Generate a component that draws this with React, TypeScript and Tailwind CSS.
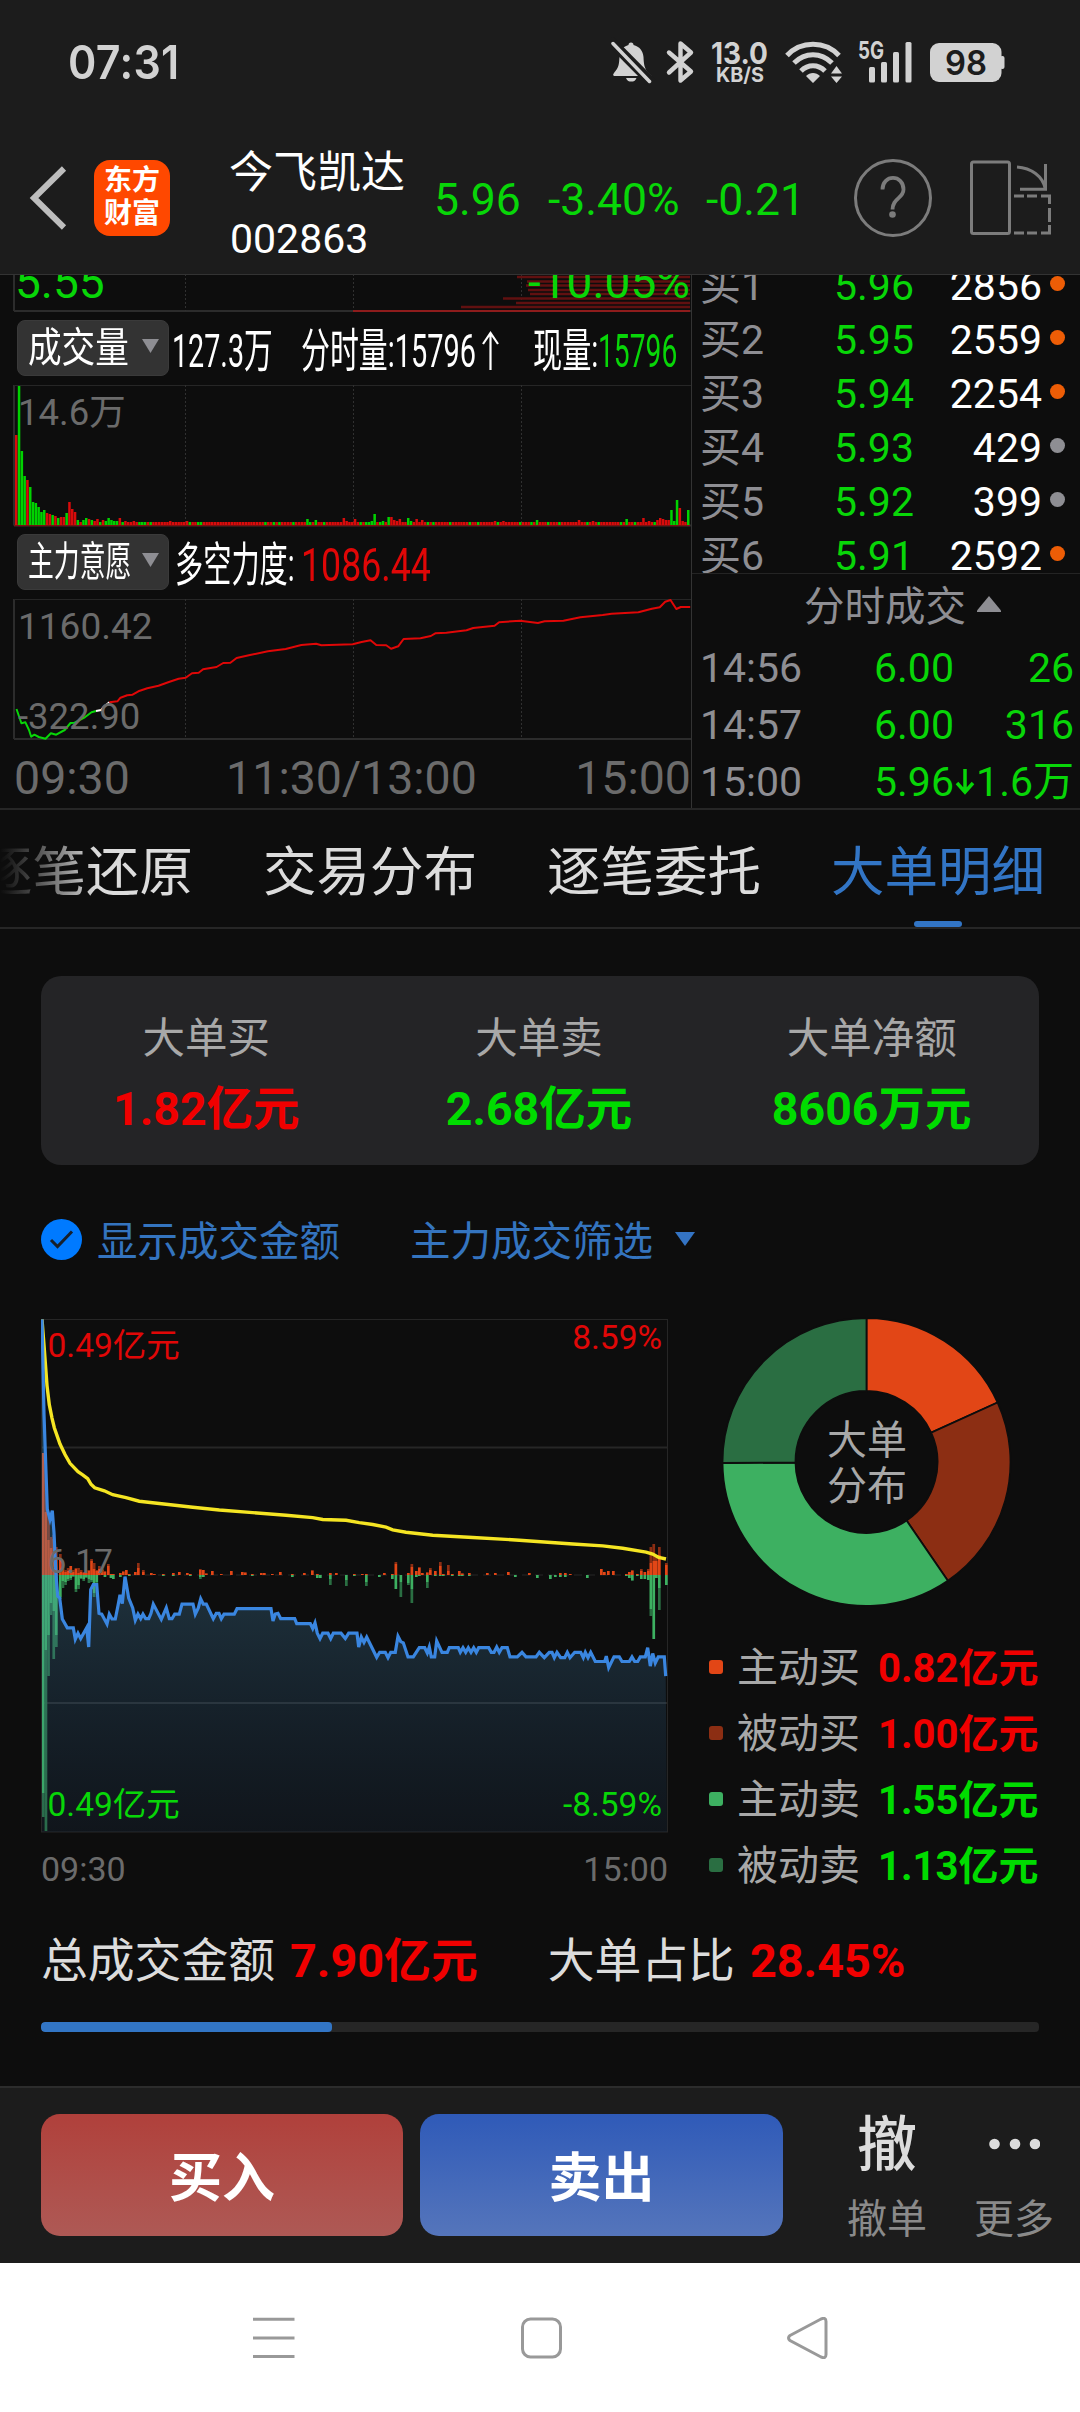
import { clsx } from 'clsx';

const GREEN = '#08d608';
const RED = '#e00707';

const bids = [
  { label: '买1', price: '5.96', qty: '2856', hot: true },
  { label: '买2', price: '5.95', qty: '2559', hot: true },
  { label: '买3', price: '5.94', qty: '2254', hot: true },
  { label: '买4', price: '5.93', qty: '429', hot: false },
  { label: '买5', price: '5.92', qty: '399', hot: false },
  { label: '买6', price: '5.91', qty: '2592', hot: true },
];

const trades = [
  { time: '14:56', price: '6.00', qty: '26', down: false },
  { time: '14:57', price: '6.00', qty: '316', down: false },
  { time: '15:00', price: '5.96', qty: '1.6万', down: true },
];

const summary = [
  { label: '大单买', value: '1.82亿元', up: true },
  { label: '大单卖', value: '2.68亿元', up: false },
  { label: '大单净额', value: '8606万元', up: false },
];

const slices = [
  { label: '主动买', value: 0.82, text: '0.82亿元', color: '#e24616', dot: 'bg-[#e24616]', up: true },
  { label: '被动买', value: 1.0, text: '1.00亿元', color: '#8c2e13', dot: 'bg-[#8c2e13]', up: true },
  { label: '主动卖', value: 1.55, text: '1.55亿元', color: '#3db061', dot: 'bg-[#3db061]', up: false },
  { label: '被动卖', value: 1.13, text: '1.13亿元', color: '#2a6e42', dot: 'bg-[#2a6e42]', up: false },
];

// one entry per traded minute that stands out: [minute, height, colour]
const volumePeaks: [number, number, 'r' | 'g'][] = [
  [0, 90, 'r'], [1, 139, 'g'], [2, 74, 'g'], [3, 49, 'g'], [4, 45, 'r'], [5, 38, 'g'], [6, 23, 'g'], [7, 22, 'g'],
  [8, 18, 'g'], [9, 13, 'g'], [10, 15, 'g'], [11, 12, 'r'], [12, 11, 'r'], [13, 10, 'g'], [14, 9, 'r'], [15, 7, 'g'],
  [16, 8, 'r'], [17, 8, 'r'], [18, 12, 'g'], [19, 23, 'r'], [20, 16, 'r'], [21, 13, 'r'], [22, 5, 'g'], [23, 3, 'r'],
  [24, 5, 'g'], [25, 7, 'g'], [26, 6, 'r'], [27, 5, 'g'], [28, 4, 'r'], [29, 6, 'r'], [30, 3, 'g'], [31, 5, 'r'],
  [32, 4, 'g'], [33, 7, 'g'], [34, 5, 'g'], [35, 4, 'g'], [36, 4, 'g'], [37, 7, 'r'], [38, 3, 'g'], [39, 4, 'r'],
  [42, 4, 'r'], [55, 4, 'r'], [61, 4, 'r'], [104, 6, 'g'], [107, 5, 'g'], [117, 7, 'r'], [118, 4, 'r'], [121, 6, 'r'],
  [125, 3, 'g'], [127, 4, 'g'], [128, 11, 'g'], [131, 4, 'g'], [133, 8, 'g'], [134, 8, 'r'], [135, 5, 'r'], [136, 4, 'r'],
  [137, 6, 'r'], [140, 7, 'g'], [141, 4, 'g'], [143, 6, 'r'], [145, 5, 'r'], [171, 4, 'r'], [174, 4, 'r'], [186, 5, 'g'],
  [201, 5, 'r'], [206, 4, 'r'], [218, 6, 'g'], [224, 7, 'r'], [226, 4, 'r'], [229, 5, 'r'], [230, 7, 'r'], [231, 6, 'r'],
  [232, 5, 'r'], [233, 5, 'r'], [234, 15, 'g'], [235, 4, 'g'], [236, 25, 'g'], [237, 17, 'r'], [238, 4, 'r'], [240, 15, 'g'],
];
const quietGreen = [44, 45, 46, 48, 62, 65, 66, 89, 92, 94, 99, 105, 110, 123, 126, 130, 147, 149, 155, 162, 165, 172, 180, 184, 190, 194, 204, 208, 216, 221, 228];

const volume = Array.from({ length: 241 }, (_, i) => {
  const peak = volumePeaks.find((p) => p[0] === i);
  return {
    x: 15 + i * 2.8,
    h: peak ? peak[1] : 3,
    color: (peak ? peak[2] === 'g' : quietGreen.includes(i)) ? '#00d200' : '#d90b0b',
  };
});

// big order flow: [x, buy active, buy passive, sell active, sell passive], in px from the zero line
const flow = [
  [1, 122, 0, 218, 24], [3.6, 63, 20, 75, 181], [6.2, 35, 27, 60, 41], [8.8, 27, 11, 28, 12], [11.4, 36, 4, 36, 48],
  [14, 16, 12, 60, 12], [18, 15, 6, 22, 2], [20.6, 6, 2, 6, 7], [23.2, 3, 2, 7, 3], [25.8, 4, 3, 4, 2],
  [28.4, 9, 0, 3, 2], [31, 3, 2, 1, 1], [33.6, 6, 1, 14, 3], [36.2, 2, 5, 10, 4], [38.8, 3, 2, 3, 1],
  [41.4, 2, 1, 4, 2], [44, 2, 3, 2, 1], [46.6, 4, 1, 4, 4], [49.2, 14, 2, 5, 2], [51.8, 6, 6, 18, 4], [54.4, 4, 1, 7, 3],
  [57, 6, 3, 0, 0], [60, 5, 1, 0, 0], [62.6, 3, 1, 2, 0], [66, 9, 2, 0, 0], [68.6, 1, 0, 3, 0], [71, 1, 0, 4, 0],
  [78, 2, 0, 2, 0], [81, 3, 1, 0, 0], [84, 5, 0, 0, 0], [87, 1, 0, 1, 0], [93, 3, 0, 0, 0], [96, 7, 5, 0, 0], [101, 3, 2, 0, 0],
  [109, 2, 0, 0, 0], [112, 1, 0, 0, 0], [121, 1, 0, 1, 0], [131, 2, 0, 1, 0], [137, 3, 0, 0, 0], [145, 2, 0, 0, 0],
  [148, 1, 0, 1, 0], [158, 5, 1, 2, 2], [161, 5, 0, 2, 0], [164, 1, 1, 0, 0], [170, 4, 0, 0, 0], [179, 1, 0, 0, 0],
  [189, 4, 0, 0, 0], [200, 3, 0, 0, 0], [203, 2, 1, 0, 0], [210, 1, 0, 1, 0], [219, 2, 0, 0, 0], [222, 2, 0, 0, 0],
  [230, 1, 0, 0, 0], [238, 3, 0, 0, 0], [250, 1, 0, 2, 0], [262, 2, 0, 0, 0], [270, 4, 1, 0, 0], [275, 1, 0, 3, 0],
  [278, 0, 0, 3, 0], [288, 2, 0, 4, 6], [294, 2, 0, 0, 0], [304, 0, 0, 5, 6], [312, 1, 0, 1, 0], [320, 1, 0, 0, 0],
  [324, 1, 0, 7, 4], [337, 0, 0, 2, 0], [342, 2, 0, 0, 0], [350, 1, 0, 4, 0], [353.5, 11, 2, 14, 0], [358.5, 0, 0, 7, 15],
  [366, 2, 0, 8, 2], [369.5, 8, 3, 14, 14], [374, 4, 0, 2, 0], [377, 7, 1, 1, 0], [380, 2, 0, 0, 0], [385, 2, 1, 7, 6],
  [388, 5, 2, 0, 0], [393, 4, 0, 1, 0], [398, 9, 4, 1, 0], [401, 1, 0, 1, 0], [406, 4, 6, 0, 0], [410, 1, 0, 1, 0],
  [417, 4, 0, 1, 0], [420, 1, 1, 1, 0], [427, 2, 0, 1, 0], [445, 2, 0, 0, 0], [453, 2, 0, 0, 0], [466, 3, 0, 0, 0],
  [473, 0, 0, 2, 0], [487, 2, 0, 0, 0], [495, 0, 0, 3, 0], [508, 0, 0, 4, 0], [513, 0, 0, 2, 0], [518, 2, 0, 2, 0],
  [523, 2, 0, 2, 0], [528, 1, 0, 0, 0], [545, 0, 0, 3, 0], [559, 6, 0, 0, 0], [562, 3, 0, 0, 0], [566, 4, 0, 0, 0],
  [571, 4, 0, 0, 0], [584, 1, 0, 1, 0], [587, 3, 0, 3, 0], [590, 4, 1, 5, 1], [595, 1, 0, 1, 0],
  // closing minutes
  [599, 4, 2, 4, 0], [602.5, 3, 0, 4, 0], [606, 4, 2, 5, 0], [608.5, 12, 16, 34, 7], [611.4, 14, 17, 64, 0],
  [614, 14, 6, 3, 0], [617, 20, 8, 13, 22], [624, 10, 2, 10, 0],
];

const bluePoints =
  '68,52 74,300 84,548 92,575 99,552 104,610 110,720 115,775 121,780 129,835 144,858 162,858 168,888 176,872 184,886 202,858 208,908 214,758 222,745 232,745 239,820 247,822 263,848 270,822 278,835 288,835 296,800 302,772 309,795 317,724 328,780 340,806 348,838 356,822 364,834 371,822 379,834 388,834 395,820 402,796 426,836 441,806 450,834 458,834 466,822 480,822 488,796 521,796 528,822 537,806 544,782 552,796 561,796 582,834 591,820 599,820 606,834 614,822 645,822 653,808 755,808 761,840 768,822 776,820 784,834 826,834 832,847 873,847 880,860 887,845 894,872 902,886 910,872 926,872 934,886 942,872 965,872 978,886 988,872 1013,872 1018,908 1026,882 1034,896 1042,882 1055,905 1072,935 1081,922 1098,922 1106,936 1114,922 1128,922 1136,880 1144,894 1152,897 1166,934 1182,934 1200,910 1216,910 1224,924 1230,908 1236,934 1246,934 1252,892 1268,922 1284,922 1290,910 1317,910 1323,922 1331,910 1339,922 1347,910 1355,922 1363,910 1371,922 1378,910 1408,910 1416,922 1424,922 1432,908 1440,922 1448,910 1464,910 1472,934 1494,934 1508,922 1520,934 1550,934 1560,922 1575,936 1590,922 1598,922 1605,936 1613,922 1624,936 1636,936 1644,922 1652,936 1666,922 1684,922 1692,936 1698,922 1706,936 1714,922 1728,946 1756,946 1761,932 1768,962 1784,934 1800,934 1808,946 1830,946 1838,934 1846,946 1855,946 1863,934 1878,934 1885,910 1893,958 1900,925 1908,950 1917,934 1935,934 1939,984';
const yellowPoints =
  '68,52 75,130 83,225 90,275 98,310 105,335 122,378 137,405 152,428 176,450 190,458 205,468 215,483 226,492 255,500 280,510 320,518 360,527 440,535 520,543 600,550 700,557 800,564 880,570 910,575 980,577 1020,583 1060,588 1100,595 1120,602 1160,608 1240,616 1360,622 1500,629 1660,639 1750,644 1810,650 1880,660 1900,665 1918,674 1940,678';

const forceGreen = '37,537 48,580 57,577 65,600 70,620 77,614 87,621 102,626 114,610 126,614 145,600 158,579 167,578 190,562 205,547 215,543';
const forceWhite = '215,543 227,540 233,530 245,517';
const forceRed =
  '245,517 263,514 270,503 285,496 297,494 310,484 330,475 355,467 380,455 400,446 416,443 430,430 445,428 455,418 485,411 500,399 516,398 530,384 560,375 600,364 640,357 675,345 708,341 720,346 790,343 810,336 830,331 843,345 865,346 876,356 892,349 904,327 942,325 965,318 975,310 1000,308 1045,301 1060,294 1108,287 1118,277 1165,272 1205,279 1220,274 1262,272 1300,262 1350,255 1370,251 1430,247 1460,236 1478,232 1490,215 1502,210 1515,237 1525,231 1546,231';

function scalePoints(points: string, sx: number, sy: number, dx = 0, dy = 0) {
  return points.split(' ').map((p) => {
    const [x, y] = p.split(',').map(Number);
    return `${((x - dx) / sx).toFixed(1)},${((y - dy) / sy).toFixed(1)}`;
  }).join(' ');
}

function StatusBar() {
  return (
    <div className="flex h-[124px] items-center pl-[68px] text-[#d2d2d2]">
      <span className="w-[543px] text-[46px] font-semibold leading-none tracking-[0.3px] font-['Inter',sans-serif]">
        <span className="inline-block origin-left scale-x-[.935]">07:31</span>
      </span>
      <svg width="400" height="50" viewBox="611 37 400 50" fill="currentColor">
        {/* muted bell */}
        <path d="M614 76c-1.500-1-1-2 1.500-5 4-5 3.500-9 4-14 .5-7 4-10.500 9-12a2.500 2.500 0 0 1 5 0c6 1.500 9.500 6 10 12 .3 6 .5 10 4 15l4 4zM626 78h10.500c-1 3-3 3.500-5.200 3.500s-4.300-.5-5.300-3.500z" />
        <path d="M609 39.500l43 43.500" stroke="#1c1c1c" strokeWidth="10" />
        <path d="M613 43.500l36.500 38" stroke="currentColor" strokeWidth="3.500" strokeLinecap="round" />
        {/* bluetooth */}
        <path d="M669 52.500l22 19-10.500 9V43.500l10.500 9-22 20" fill="none" stroke="currentColor" strokeWidth="4.400" strokeLinejoin="round" strokeLinecap="round" />
        <text x="711" y="63.500" fontSize="30" fontWeight="700" fontFamily="Inter" textLength="57" lengthAdjust="spacingAndGlyphs">13.0</text>
        <text x="716" y="82" fontSize="20" fontWeight="700" fontFamily="Inter" textLength="48" lengthAdjust="spacingAndGlyphs">KB/S</text>
        {/* wifi */}
        <g fill="none" stroke="currentColor" strokeWidth="5">
          <path d="M787 55.500c14-15 38-15 52 0" />
          <path d="M794 63c11-11 27-11 38 0" />
          <path d="M801 71c7-7 17-7 24 0" />
        </g>
        <path d="M806 76c4-4 10-4 14 0l-7 7zM831 73.500h11l-5.500-7.500zM831 76.500h11l-5.500 6.500z" />
        <text x="858" y="59" fontSize="24" fontWeight="700" fontFamily="Inter" textLength="26" lengthAdjust="spacingAndGlyphs">5G</text>
        <rect x="869" y="67" width="6" height="15.500" rx="1.500" />
        <rect x="881" y="62" width="6" height="20.500" rx="1.500" />
        <rect x="893" y="52" width="6" height="30.500" rx="1.500" />
        <rect x="905.500" y="42" width="6" height="40.500" rx="1.500" />
        <rect x="930" y="43" width="71.500" height="39" rx="9" />
        <rect x="1000" y="56" width="4.500" height="13" rx="2" />
        <text x="945" y="74.500" fontSize="34" fontWeight="600" fontFamily="Inter" fill="#1c1c1c" textLength="42" lengthAdjust="spacingAndGlyphs">98</text>
      </svg>
    </div>
  );
}

function StockHeader() {
  return (
    <div className="flex h-[150px] items-center">
      <svg className="mb-[2px] ml-[28px] mr-[26px]" width="40" height="66" viewBox="0 0 40 66" fill="none" stroke="#bdbdbd" strokeWidth="6">
        <path d="M36 3.500L6 33l30 29.500" />
      </svg>
      <div className="mb-[2px] flex h-[76px] w-[76px] flex-col items-center justify-center rounded-2xl bg-[#ff4800] pb-[3px] text-[28px] font-bold leading-[33px] text-white">
        <span>东方</span>
        <span>财富</span>
      </div>
      <div className="ml-[59px] mt-[14px] flex w-[204px] flex-col text-white">
        <span className="text-[44px] leading-[66px]">今飞凯达</span>
        <span className="pl-px text-[41px] leading-[66px]">002863</span>
      </div>
      <div className="flex text-[44.500px] leading-[60px] text-[#08d608]">
        <span className="w-[115px] pl-px pt-[2px]">5.96</span>
        <span className="w-[158px] pt-[2px]">-3.40%</span>
        <span className="w-[148px] pt-[2px]">-0.21</span>
      </div>
      <svg className="mb-[2px]" width="200" height="80" viewBox="854 158 200 80" fill="none" stroke="#7c7c7c" strokeWidth="3">
        <circle cx="893" cy="198" r="37.500" />
        <path d="M882.500 189.500c0-15.500 21-15.500 21 0 0 9-11 8.500-11 20" strokeWidth="3.800" />
        <circle cx="892.500" cy="214.500" r="3.300" fill="#7c7c7c" stroke="none" />
        <rect x="971.500" y="162" width="38" height="71.500" rx="2" />
        <path d="M1017 167c14 1 26 9 28.500 22.500M1045.500 164v25.500M1020 189.200h27" />
        <path d="M1014 196h10M1027 196h10M1041 196h8.500v8M1049.500 208v14M1049.500 225v8h-8.500M1037 233h-10M1024 233h-10" />
      </svg>
    </div>
  );
}

function Grid({ top, bottom }: { top: number; bottom: number }) {
  return (
    <>
      <path d={`M14 ${bottom}H691M14 ${top}V${bottom}`} stroke="#2c2c2c" strokeWidth="2" />
      <path d={`M14 ${top + 0.5}H691`} stroke="#262626" />
      {[185.5, 353.5, 521.5].map((x) => (
        <path key={x} d={`M${x} ${top}V${bottom}`} stroke="#303030" strokeDasharray="2 2" />
      ))}
    </>
  );
}

function Picker({ text, squeeze }: { text: string; squeeze: string }) {
  return (
    <div className="flex h-14 w-[152px] shrink-0 items-center justify-between rounded-lg border border-[#3a3a3a] bg-[#333] pl-[10px] pr-[9px] text-white">
      <span className="w-[101px] text-[41px] leading-[54px]">
        <span className={clsx('inline-block origin-left whitespace-nowrap', squeeze)}>{text}</span>
      </span>
      <svg className="mb-1 shrink-0" width="17" height="14" viewBox="0 0 17 14" fill="#8e8e93">
        <path d="M0 0h17l-8.500 14z" />
      </svg>
    </div>
  );
}

function Squeezed({ text, className, squeeze = 'scale-x-[.61]' }: { text: string; className: string; squeeze?: string }) {
  return (
    <span className={clsx('h-14 shrink-0 text-[47px] leading-[61px]', className)}>
      <span className={clsx('inline-block origin-left whitespace-nowrap', squeeze)}>{text}</span>
    </span>
  );
}

function TimeCharts() {
  const depth = [[277, 517], [281.5, 527], [285.5, 526], [290, 528], [294, 530], [298.5, 503], [303, 516], [307, 461]];
  return (
    <div className="w-[692px] shrink-0 border-r border-[#333]">
      <svg className="block" width="691" height="38" viewBox="0 275 691 38" fill="none">
        <Grid top={274} bottom={311} />
        {depth.map(([y, x]) => (
          <path key={y} d={`M${x} ${y}H690`} stroke="#611010" strokeWidth="2.500" />
        ))}
        <path d="M353 311H690" stroke="#8e1c1c" strokeWidth="2" />
        <text x="15" y="298" fontSize="46" fill={GREEN}>5.55</text>
        <text x="690" y="298" fontSize="46" fill={GREEN} textAnchor="end">-10.05%</text>
      </svg>

      <div className="mt-[7px] flex h-14 items-center pl-[17px] text-white">
        <Picker text="成交量" squeeze="scale-x-[.82]" />
        <Squeezed text="127.3万" className="ml-[3px] w-[129px]" />
        <Squeezed text="分时量:15796" className="w-[181px]" squeeze="scale-x-[.615]" />
        <svg className="mr-[34px] mt-[3px] shrink-0" width="17" height="40" viewBox="0 0 17 40" fill="none" stroke="white" strokeWidth="2.200">
          <path d="M8.500 40V3M1 14l7.500-11L16 14" />
        </svg>
        <Squeezed text="现量:" className="w-[65px]" squeeze="scale-x-[.62]" />
        <Squeezed text="15796" className="text-[#08d608]" squeeze="scale-x-[.6]" />
      </div>

      <svg className="mt-[9px] block" width="691" height="142" viewBox="0 385 691 142" fill="none">
        <Grid top={385} bottom={525.5} />
        <path d="M14 525.500H690" stroke="#7a1010" strokeWidth="1.500" />
        <text x="18" y="425" fontSize="36.500" fill="#6b6b6b">14.6万</text>
        {volume.map((v) => (
          <rect key={v.x} x={v.x} y={525 - v.h} width="2.500" height={v.h} fill={v.color} />
        ))}
      </svg>

      <div className="mt-[7px] flex h-14 items-center pl-[17px] text-white">
        <Picker text="主力意愿" squeeze="scale-x-[.63]" />
        <Squeezed text="多空力度:" className="ml-[6px] w-[126px]" squeeze="scale-x-[.6]" />
        <Squeezed text="1086.44" className="text-[#e00707]" squeeze="scale-x-[.76]" />
      </div>

      <svg className="mt-[9px] block" width="691" height="142" viewBox="0 599 691 142" fill="none">
        <Grid top={599} bottom={739} />
        <text x="18" y="639" fontSize="37" fill="#6b6b6b">1160.42</text>
        <g strokeWidth="2" strokeLinejoin="round" transform="translate(0 530)">
          <polyline points={scalePoints(forceGreen, 2.24, 3)} stroke={GREEN} />
          <polyline points={scalePoints(forceWhite, 2.24, 3)} stroke="#fff" />
          <polyline points={scalePoints(forceRed, 2.24, 3)} stroke={RED} />
        </g>
        <text x="18" y="729" fontSize="36.500" fill="#6b6b6b">-322.90</text>
      </svg>

      <div className="flex justify-between pl-[14px] pt-[8px] text-[46.500px] leading-[58px] text-[#6b6b6b]">
        <span>09:30</span>
        <span className="pr-[2px]">11:30/13:00</span>
        <span>15:00</span>
      </div>
    </div>
  );
}

function OrderBook() {
  return (
    <div className="min-w-0 flex-1 text-[41px] leading-[54px]">
      <div className="h-[298px] overflow-hidden">
        {bids.map((bid, i) => (
          <div key={bid.label} className={clsx('flex h-[54px] items-center pl-[8px] pr-[15px]', i === 0 && '-mt-[16px]')}>
            <span className="w-[134px] text-[#8e8e93]">{bid.label}</span>
            <span className="text-[#08d608]">{bid.price}</span>
            <span className="flex-1 text-right text-white">{bid.qty}</span>
            <span className={clsx('mb-[5px] ml-[8px] h-[15px] w-[15px] rounded-full', bid.hot ? 'bg-[#ed5d06]' : 'bg-[#8e8e93]')} />
          </div>
        ))}
      </div>
      <div className="flex h-[66px] items-center border-t border-[#242424] pl-[112px] pt-px text-[#8e8e93]">
        <span className="text-[40.500px]">分时成交</span>
        <svg className="mb-[6px] ml-[11px]" width="24" height="16" viewBox="0 0 24 16" fill="#8e8e93">
          <path d="M12 0l12 14.500v1.500H0v-1.500z" />
        </svg>
      </div>
      <div className="pt-px">
        {trades.map((t) => (
          <div key={t.time} className="flex h-[56.800px] items-center pl-[8px] pr-[6px] text-[#08d608]">
            <span className="w-[174px] text-[#8e8e93]">{t.time}</span>
            <span>{t.price}</span>
            {t.down && (
              <svg className="ml-px" width="20" height="27" viewBox="0 0 20 27" fill="none" stroke="currentColor" strokeWidth="3.500">
                <path d="M10 1v22M2 15l8 9 8-9" />
              </svg>
            )}
            <span className="flex-1 text-right">{t.qty}</span>
          </div>
        ))}
      </div>
    </div>
  );
}

function Tabs() {
  return (
    <div className="h-[119px] overflow-hidden border-b-2 border-[#262626]">
      <div className="-ml-[21px] flex h-full w-max gap-[70px] text-[53.500px] leading-[126px] text-[#dcdcdc]">
        <span className="bg-gradient-to-r from-[#0d0d0d] from-10% to-[#dcdcdc] to-55% bg-clip-text text-transparent">逐笔还原</span>
        <span>交易分布</span>
        <span>逐笔委托</span>
        <span className="flex flex-col items-center text-[#3275c5]">
          <span className="h-[111px]">大单明细</span>
          <span className="h-[7px] w-[48px] rounded-[3px] bg-[#3275c5]" />
        </span>
      </div>
    </div>
  );
}

function FlowBars() {
  return (
    <>
      {flow.map(([x, a, b, c, d]) => (
        <g key={x}>
          <rect x={x} y={256 - a} width="2.700" height={a} fill="#e24616" />
          <rect x={x} y={256 - a - b} width="2.700" height={b} fill="#8c2e13" />
          <rect x={x} y="256" width="2.700" height={c} fill="#3db061" />
          <rect x={x} y={256 + c} width="2.700" height={d} fill="#2a6e42" />
        </g>
      ))}
    </>
  );
}

function FlowChart() {
  const line = scalePoints(bluePoints, 3, 2.613, 65, 51);
  return (
    <div className="w-[627px]">
      <svg className="block" width="627" height="514" viewBox="0 0 627 514" fill="none">
        <defs>
          <linearGradient id="area" x1="0" y1="0" x2="0" y2="1">
            <stop offset="0" stopColor="#4a9fd0" stopOpacity="0.360" />
            <stop offset="0.550" stopColor="#4a8fb8" stopOpacity="0.260" />
            <stop offset="1" stopColor="#2a5a90" stopOpacity="0.110" />
          </linearGradient>
        </defs>
        <rect x="0.500" y="0.500" width="626" height="512.500" stroke="#262626" />
        <path d="M0 128.500H627M0 384H627" stroke="#262626" strokeWidth="2" />
        <path d="M0 256H627" stroke="#262626" strokeDasharray="8 5" />
        <FlowBars />
        <polygon points={`${line} 626,513 1,513`} fill="url(#area)" />
        <polyline points={scalePoints(yellowPoints, 3, 2.613, 65, 51)} stroke="#f5e523" strokeWidth="3.400" />
        <polyline points={line} stroke="#3a86e0" strokeWidth="3.200" />
        <g fontSize="33.500">
          <text x="6.500" y="38" fill={RED}>0.49亿元</text>
          <text x="621" y="30" fill={RED} textAnchor="end">8.59%</text>
          <text x="6.500" y="254" fill="#6b6b6b">6.17</text>
          <text x="6.500" y="496.500" fill={GREEN}>0.49亿元</text>
          <text x="621" y="496.500" fill={GREEN} textAnchor="end">-8.59%</text>
        </g>
      </svg>
      <div className="mt-[16px] flex justify-between text-[34px] leading-10 text-[#6b6b6b]">
        <span>09:30</span>
        <span>15:00</span>
      </div>
    </div>
  );
}

function slicePath(from: number, to: number) {
  const at = (r: number, t: number) => {
    const a = t * 2 * Math.PI;
    return `${(144.5 + r * Math.sin(a)).toFixed(2)} ${(145 - r * Math.cos(a)).toFixed(2)}`;
  };
  return `M${at(144, from)}A144 144 0 0 1 ${at(144, to)}L${at(71, to)}A71 71 0 0 0 ${at(71, from)}Z`;
}

function Donut() {
  const total = slices.reduce((sum, s) => sum + s.value, 0);
  let start = 0;
  return (
    <div className="ml-[13px] grid h-[290px] w-[290px] place-items-center">
      <svg className="col-start-1 row-start-1" width="290" height="290" viewBox="0 0 290 290">
        {slices.map((s) => {
          const from = start;
          start += s.value / total;
          return <path key={s.label} d={slicePath(from, start)} fill={s.color} stroke="#0d0d0d" strokeWidth="1.800" />;
        })}
      </svg>
      <div className="col-start-1 row-start-1 w-[90px] pt-[4px] text-center text-[40px] leading-[46.500px] text-[#a8a8a8]">大单分布</div>
    </div>
  );
}

export default function App() {
  return (
    <div className="flex h-[2412px] w-[1080px] flex-col overflow-hidden bg-[#0d0d0d] font-['Roboto','Noto_Sans_CJK_SC',sans-serif]">
      <header className="h-[275px] shrink-0 border-b border-[#333] bg-[#1c1c1c]">
        <StatusBar />
        <StockHeader />
      </header>

      <section className="flex h-[535px] shrink-0 overflow-hidden border-b-2 border-[#262626]">
        <TimeCharts />
        <OrderBook />
      </section>

      <Tabs />

      <main className="flex-1 px-[41px]">
        <div className="mt-[47px] grid h-[189px] w-[998px] grid-cols-3 rounded-[20px] bg-[#242426] pt-[33px] text-center">
          {summary.map((item) => (
            <div key={item.label} className="flex flex-col gap-[10px] pr-[2px] leading-[60px]">
              <span className="text-[42.500px] text-[#a8a8a8]">{item.label}</span>
              <span className={clsx('text-[46.500px] font-bold', item.up ? 'text-[#f00000]' : 'text-[#00dc00]')}>{item.value}</span>
            </div>
          ))}
        </div>

        <div className="mt-[50px] flex h-12 items-center text-[40.500px] leading-[48px] text-[#3474bf]">
          <svg className="mr-[15px]" width="41" height="41" viewBox="0 0 41 41" fill="none">
            <circle cx="20.500" cy="20.500" r="20.500" fill="#007aff" />
            <path d="M10 21l6.500 6.500L31 12.500" stroke="#16202c" strokeWidth="3" />
          </svg>
          <span className="mt-[6px]">显示成交金额</span>
          <span className="ml-[70px] mt-[6px]">主力成交筛选</span>
          <svg className="ml-[22px]" width="20" height="14" viewBox="0 0 20 14" fill="#3474c4">
            <path d="M0 0h20L10 14z" />
          </svg>
        </div>

        <div className="mt-[56px] flex h-[580px]">
          <FlowChart />
          <div className="-mt-[2px] ml-[41px] w-[330px]">
            <Donut />
            <ul className="mt-[28px] text-[41px] text-[#a8a8a8]">
              {slices.map((s) => (
                <li key={s.label} className="flex h-[66px] items-center whitespace-nowrap">
                  <span className={clsx('mb-[2px] mr-[14px] h-[14px] w-[14px] rounded-[3px]', s.dot)} />
                  <span className="w-[141px] pt-[2px]">{s.label}</span>
                  <span className={clsx('pt-px text-[40px] font-bold', s.up ? 'text-[#f00000]' : 'text-[#00dc00]')}>{s.text}</span>
                </li>
              ))}
            </ul>
          </div>
        </div>

        <div className="mt-[32px] flex h-[60px] items-center text-[46.800px] leading-[60px] text-[#dcdcdc]">
          <span>总成交金额</span>
          <span className="ml-[15px] font-bold text-[#f00000]">7.90亿元</span>
          <span className="ml-[70px]">大单占比</span>
          <span className="ml-[15px] font-bold text-[#f00000]">28.45%</span>
        </div>
        <div className="mt-[31px] h-[10px] w-[998px] overflow-hidden rounded-[4px] bg-[#262626]">
          <div className="h-full w-[29.150%] rounded-[4px] bg-[#3275c5]" />
        </div>
      </main>

      <footer className="flex h-[177px] shrink-0 border-t-2 border-[#2c2c2c] bg-[#1c1c1c] pl-[41px] pt-[26px]">
        <button className="h-[122px] w-[362px] rounded-[19px] bg-gradient-to-b from-[#b0403b] to-[#ae5955] pt-[9px] text-[53px] font-bold text-white">买入</button>
        <button className="ml-[17px] h-[122px] w-[363px] rounded-[19px] bg-gradient-to-b from-[#2f5ab8] to-[#5575bb] pt-[9px] text-[53px] font-bold text-white">卖出</button>
        <div className="ml-[62px] flex w-[84px] flex-col items-center text-[#dcdcdc]">
          <span className="pt-px text-[60px] font-medium leading-[62px]">撤</span>
          <span className="mt-[13px] text-[40px] leading-[60px] text-[#8a8a8a]">撤单</span>
        </div>
        <div className="ml-[43px] flex w-[84px] flex-col items-center text-[#8a8a8a]">
          <svg className="h-[62px]" width="52" height="62" viewBox="0 0 52 62" fill="#dcdcdc">
            <circle cx="6.500" cy="30" r="5.300" />
            <circle cx="27" cy="30" r="5.300" />
            <circle cx="47" cy="30" r="5.300" />
          </svg>
          <span className="mt-[14px] text-[40px] leading-[60px]">更多</span>
        </div>
      </footer>

      <nav className="flex h-[149px] shrink-0 items-center bg-white pl-[253px]">
        <svg width="575" height="42" viewBox="253 2316.500 575 42" fill="none" stroke="#999" strokeWidth="3">
          <path d="M253 2318.700h41.500M253 2337.500h41.500M253 2356h41.500" />
          <rect x="522.500" y="2318.500" width="38" height="38" rx="8" />
          <path d="M790 2335l31-16.500q5-2 5 2.500v33q0 4.500-5 2.500L790 2340q-3-2.500 0-5z" />
        </svg>
      </nav>
    </div>
  );
}
